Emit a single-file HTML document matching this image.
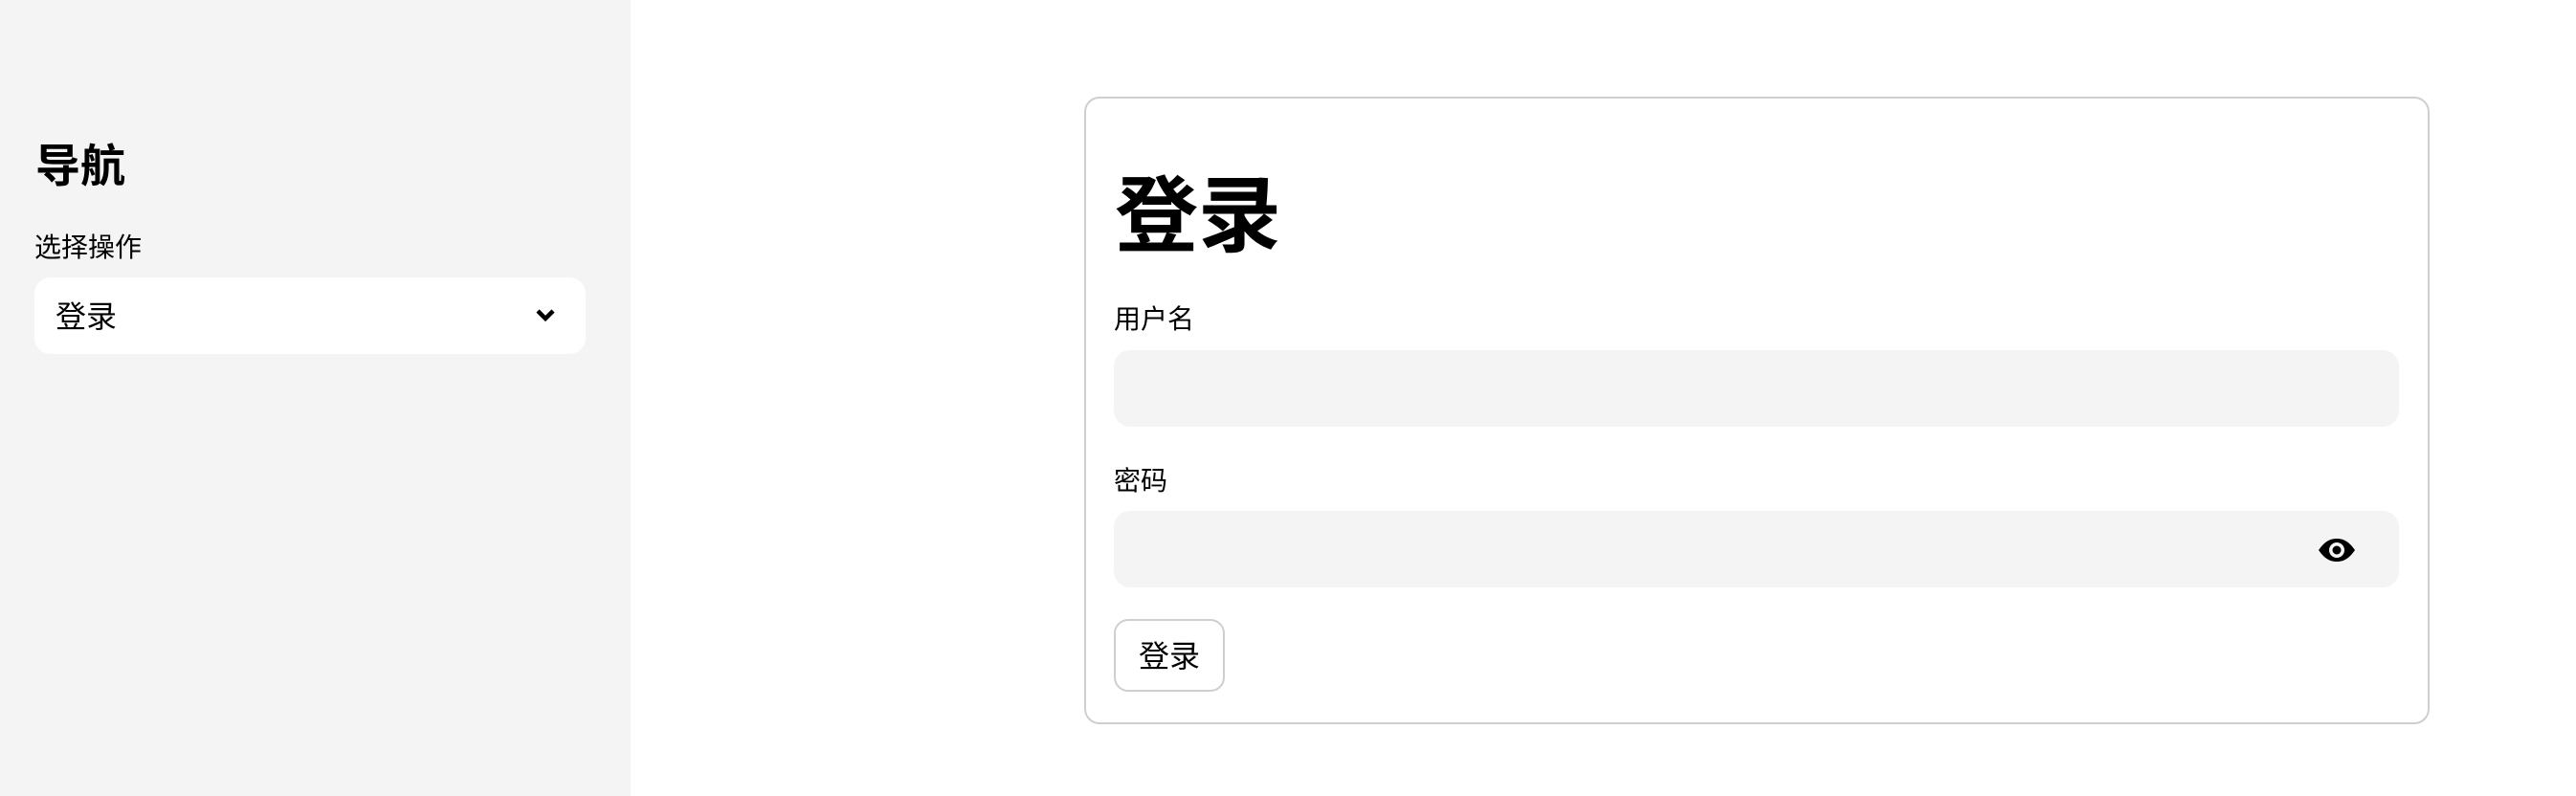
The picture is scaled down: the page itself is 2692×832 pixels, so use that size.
<!DOCTYPE html>
<html><head><meta charset="utf-8"><style>
body{margin:0;width:2692px;height:832px;background:#fff;font-family:"Liberation Sans","Noto Sans CJK SC",sans-serif;position:relative;overflow:hidden;color:#000}
.side{position:absolute;left:0;top:0;width:659px;height:832px;background:#f4f4f4}
.abs{position:absolute;line-height:1;white-space:nowrap}
.sel{position:absolute;left:36px;top:290px;width:576px;height:80px;background:#fff;border-radius:17px}
.card{position:absolute;left:1133px;top:101px;width:1402px;height:652px;border:2px solid #cfcfcf;border-radius:16px}
.inp{position:absolute;left:1164px;width:1343px;height:80px;background:#f4f4f4;border-radius:17px}
.btn{position:absolute;left:1164px;top:647px;width:112px;height:72px;border:2px solid #cfcfcf;border-radius:15px;box-sizing:content-box}
</style></head><body>
<div class="side"></div>
<div class="abs" style="left:37px;top:150px;font-size:47px;font-weight:bold">导航</div>
<div class="abs" style="left:36px;top:245px;font-size:28px">选择操作</div>
<div class="sel"></div>
<div class="abs" style="left:58px;top:315px;font-size:32px">登录</div>
<svg class="abs" style="left:558px;top:321px" width="24" height="18" viewBox="0 0 24 18"><path d="M4 4 L12 12 L20 4" fill="none" stroke="#000" stroke-width="4.5"/></svg>
<div class="card"></div>
<div class="abs" style="left:1165px;top:183px;font-size:87px;font-weight:bold">登录</div>
<div class="abs" style="left:1164px;top:320px;font-size:28px">用户名</div>
<div class="inp" style="top:366px"></div>
<div class="abs" style="left:1164px;top:489px;font-size:28px">密码</div>
<div class="inp" style="top:534px"></div>
<svg class="abs" style="left:2422px;top:562px" width="40" height="26" viewBox="0 0 40 26"><path d="M1 13 C8 3 14 1 20 1 C26 1 32 3 39 13 C32 23 26 25 20 25 C14 25 8 23 1 13Z" fill="#000"/><circle cx="20" cy="13" r="8" fill="#f4f4f4"/><circle cx="20" cy="13" r="4.5" fill="#000"/></svg>
<div class="btn"></div>
<div class="abs" style="left:1190px;top:670px;font-size:32px">登录</div>
</body></html>
